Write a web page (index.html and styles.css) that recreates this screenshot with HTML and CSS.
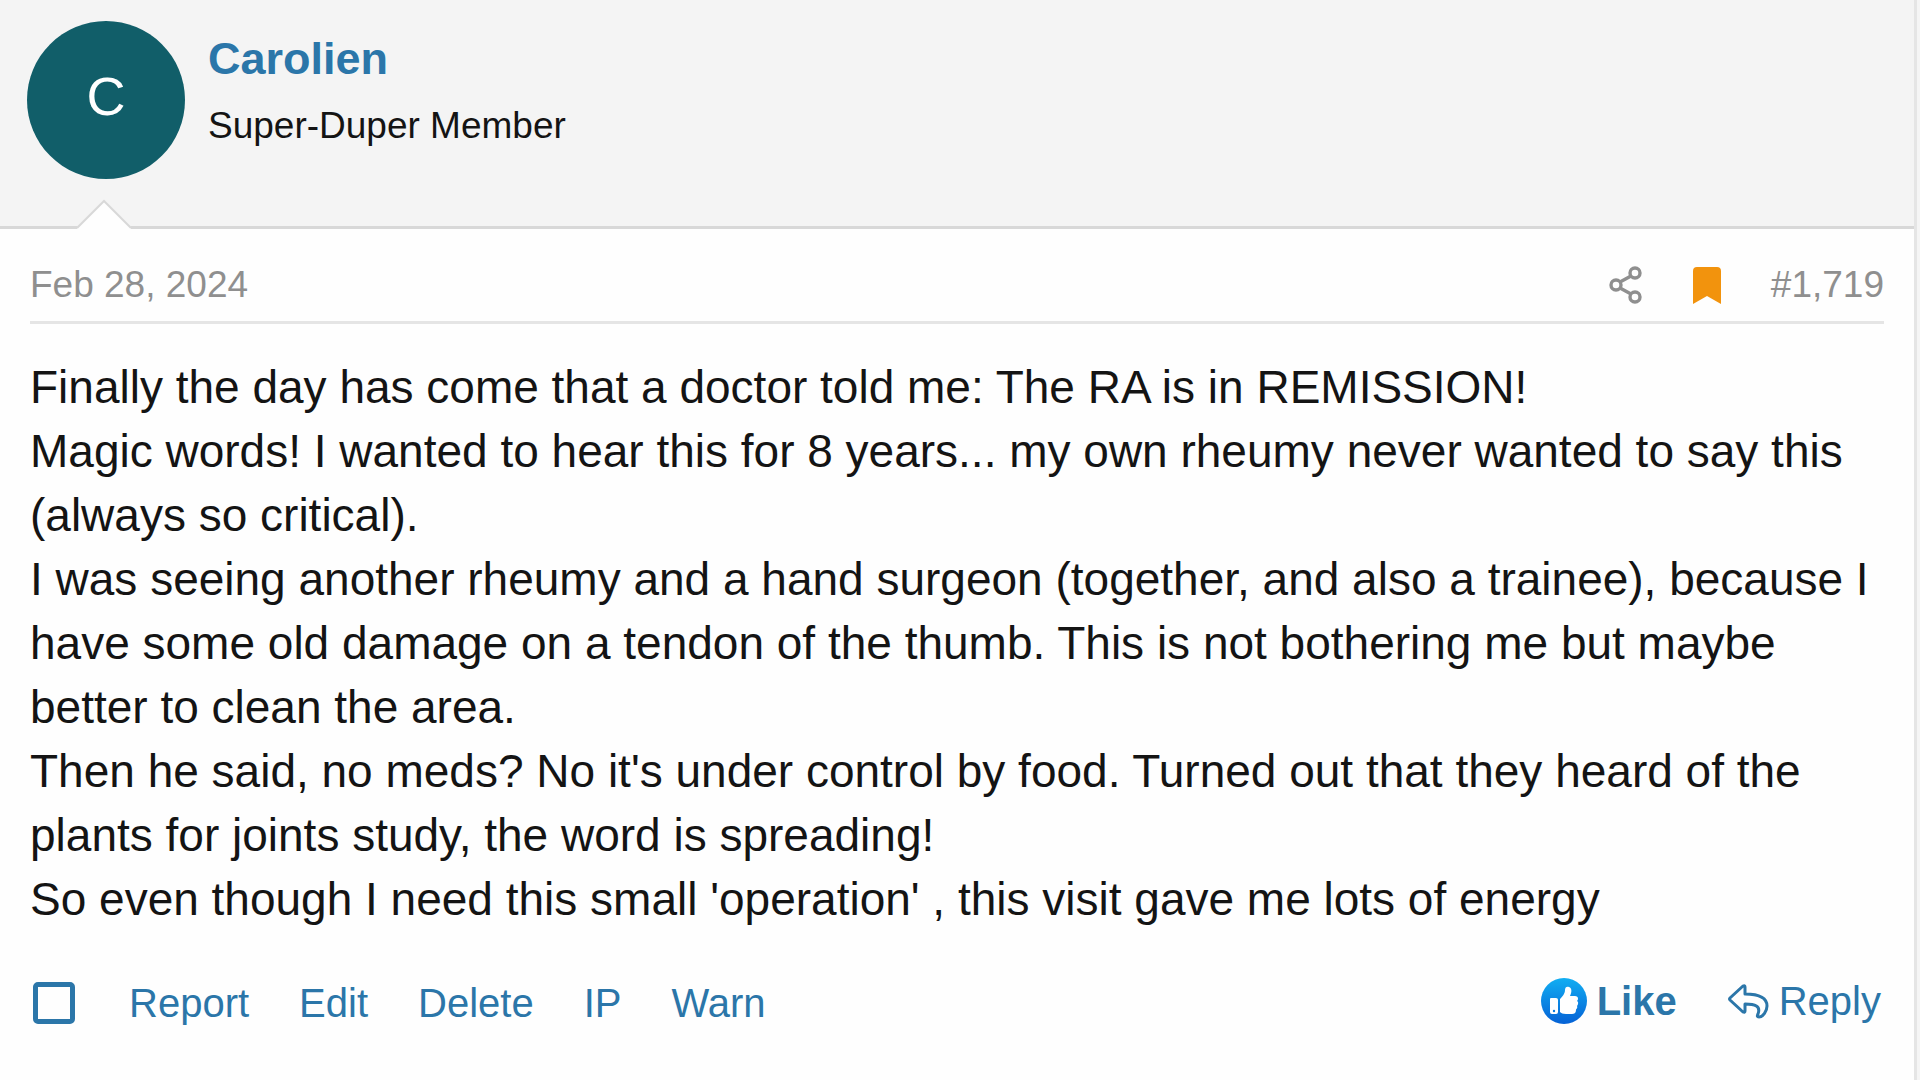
FILE: index.html
```html
<!DOCTYPE html>
<html lang="en">
<head>
    <meta charset="UTF-8">
    <meta name="viewport" content="width=device-width, initial-scale=1.0">
    <title>Forum post</title>
    <link rel="stylesheet" href="styles.css">
</head>
<body>
    <article class="message">
        <header class="message-user">
            <a href="#" class="avatar" aria-label="Carolien's profile">C</a>
            <div class="user-details">
                <h4 class="user-name"><a href="#">Carolien</a></h4>
                <h5 class="user-title">Super-Duper Member</h5>
            </div>
            <svg class="user-arrow" viewBox="0 0 58 32" aria-hidden="true">
                <path d="M2 32V30L29 3L56 30V32Z" fill="#fefefe"/>
                <path d="M2 31L29 4L56 31" fill="none" stroke="#d8d8d8" stroke-width="2"/>
            </svg>
        </header>
        <div class="message-main">
            <div class="attribution">
                <a href="#" class="date"><time datetime="2024-02-28">Feb 28, 2024</time></a>
                <div class="attribution-tools">
                    <a href="#" class="share" aria-label="Share">
                        <svg viewBox="0 0 34 38" fill="none" stroke="#8f8f8f" stroke-width="3.4">
                            <circle cx="7" cy="19" r="5"/>
                            <circle cx="26" cy="7" r="5"/>
                            <circle cx="26" cy="31" r="5"/>
                            <path d="M11 16L22 10M11 22L22 28"/>
                        </svg>
                    </a>
                    <a href="#" class="bookmark" aria-label="Bookmark">
                        <svg viewBox="0 0 28 37">
                            <path d="M4 0H24Q28 0 28 4V37L14 29L0 37V4Q0 0 4 0Z" fill="#f2930d"/>
                        </svg>
                    </a>
                    <a href="#" class="post-number">#1,719</a>
                </div>
            </div>
            <div class="message-body">
                Finally the day has come that a doctor told me: The RA is in REMISSION!<br>
                Magic words! I wanted to hear this for 8 years... my own rheumy never wanted to say this (always so critical).<br>
                I was seeing another rheumy and a hand surgeon (together, and also a trainee), because I have some old damage on a tendon of the thumb. This is not bothering me but maybe better to clean the area.<br>
                Then he said, no meds? No it's under control by food. Turned out that they heard of the plants for joints study, the word is spreading!<br>
                So even though I need this small 'operation' , this visit gave me lots of energy
            </div>
            <footer class="action-bar">
                <div class="actions">
                    <input type="checkbox" class="select-post" aria-label="Select post">
                    <a href="#">Report</a>
                    <a href="#">Edit</a>
                    <a href="#">Delete</a>
                    <a href="#">IP</a>
                    <a href="#">Warn</a>
                </div>
                <div class="reactions">
                    <a href="#" class="like">
                        <svg viewBox="0 0 46 46" aria-hidden="true">
                            <defs>
                                <linearGradient id="like-fill" x1="0" y1="0" x2="0" y2="1">
                                    <stop offset="0" stop-color="#12aef2"/>
                                    <stop offset="1" stop-color="#0562d6"/>
                                </linearGradient>
                            </defs>
                            <circle cx="23" cy="23" r="23" fill="url(#like-fill)"/>
                            <path d="M10 20H15Q17 20 17 22V34Q17 36 15 36H11Q9 36 9 34V21Q9 20 10 20Z" fill="#fff"/>
                            <circle cx="13" cy="33" r="1.2" fill="#0879df"/>
                            <path d="M19 21C21 19 24 16 24 12C24 9 26 8 28 9C31 10 31 14 29 18H34C37 18 38 21 36 23C38 24 37 27 36 28C37 30 35 31 35 32C35 35 33 36 31 36H25C22 36 20 35 19 34Z" fill="#fff"/>
                        </svg>
                        Like
                    </a>
                    <a href="#" class="reply">
                        <svg viewBox="0 0 42 36" fill="none" stroke="#2b76a9" stroke-width="3" stroke-linejoin="round" aria-hidden="true">
                            <path d="M3 15L16 3Q18 2 18 4V11C29 11 40 13 40 23C40 28 36 34 32 34C30 34 30 33 31 31C34 23 28 21 18 21V28Q18 30 16 29L3 17Q2 16 3 15Z"/>
                        </svg>
                        Reply
                    </a>
                </div>
            </footer>
        </div>
    </article>
</body>
</html>
```
FILE: styles.css
```css
* {
    box-sizing: border-box;
}

body {
    margin: 0;
    background-color: #f5f5f5;
    color: #141414;
    font-family: "Liberation Sans", Arial, sans-serif;
}

a {
    color: #2b76a9;
    text-decoration: none;
}

svg {
    display: block;
}

.message {
    min-height: 100vh;
    margin-right: 3px;
    border-right: 3px solid #e5e5e5;
    background-color: #fefefe;
}

.message-user {
    position: relative;
    display: flex;
    gap: 23px;
    padding: 21px 27px 47px;
    border-bottom: 3px solid #d8d8d8;
    background-color: #f4f4f4;
}

.avatar {
    display: flex;
    justify-content: center;
    align-items: center;
    width: 158px;
    height: 158px;
    padding-bottom: 8px;
    border-radius: 50%;
    background-color: #115e69;
    color: white;
    font-size: 54px;
}

.user-details {
    padding-top: 12px;
}

.user-name,
.user-title {
    margin: 0;
}

.user-name {
    font-size: 45px;
    line-height: 52px;
}

.user-title {
    margin-top: 19px;
    font-size: 37px;
    font-weight: normal;
    line-height: 44px;
}

/* notch pointing up at the avatar */
.user-arrow {
    position: absolute;
    left: 75px;
    bottom: -3px;
    width: 58px;
    height: 32px;
}

.message-main {
    padding: 32px 30px;
}

.attribution {
    display: flex;
    justify-content: space-between;
    align-items: center;
    height: 63px;
    padding-bottom: 12px;
    border-bottom: 3px solid #e5e5e5;
    font-size: 37px;
}

.attribution a {
    color: #8f8f8f;
}

.attribution-tools {
    display: flex;
    align-items: center;
    gap: 50px;
}

.share svg {
    width: 34px;
    height: 38px;
}

.bookmark svg {
    width: 28px;
    height: 37px;
}

.message-body {
    margin-top: 31px;
    font-size: 46px;
    line-height: 64px;
}

.action-bar {
    display: flex;
    justify-content: space-between;
    margin-top: 46px;
    padding: 0 3px;
    font-size: 40px;
    line-height: 44px;
}

.actions {
    display: flex;
    align-items: center;
    gap: 50px;
    padding-top: 4px;
}

.select-post {
    appearance: none;
    width: 42px;
    height: 42px;
    margin: 0 4px 0 0;
    border: 5px solid #2b76a9;
    border-radius: 5px;
}

.reactions {
    display: flex;
    align-items: center;
    gap: 50px;
}

.reactions a {
    display: flex;
    align-items: center;
    gap: 10px;
}

.like {
    font-weight: bold;
}

.like svg {
    width: 46px;
    height: 46px;
}

.reply svg {
    width: 42px;
    height: 36px;
}
```
